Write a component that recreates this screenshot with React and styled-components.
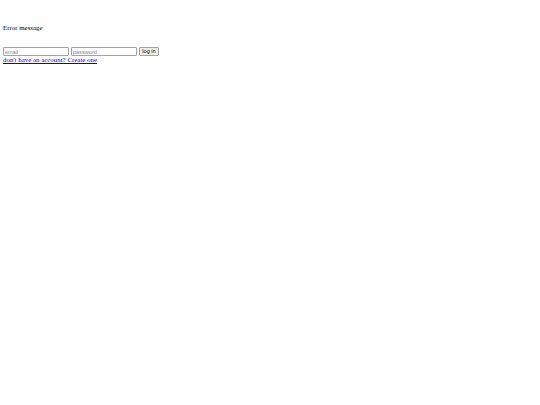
import React from 'react'
import styled, { createGlobalStyle } from 'styled-components'

const Global = createGlobalStyle`
    html, body {
        margin: 0;
        background: #fff;
    }
`

const Page = styled.div`
    padding: 3px;
    font-family: "Liberation Serif", "Times New Roman", serif;
    font-size: 6.9px;
    line-height: 8px;
    color: #000;
`

const ErrorText = styled.p`
    margin: 21px 0 0;
`

const Form = styled.form`
    display: flex;
    align-items: center;
    gap: 2px;
    margin-top: 15px;
    height: 9px;
`

const Field = styled.input`
    box-sizing: border-box;
    width: 66px;
    height: 9px;
    margin: 0;
    padding: 0 1px;
    border: 1px solid #a3a3a3;
    border-radius: 1px;
    font-family: "Liberation Sans", Arial, sans-serif;
    font-size: 5.6px;
    outline: none;
    &::placeholder {
        color: #8a8a8a;
    }
`

const Button = styled.button`
    box-sizing: border-box;
    width: 20px;
    height: 9px;
    margin: 0;
    padding: 0;
    border: 1px solid #a3a3a3;
    border-radius: 1px;
    background: #efefef;
    color: #000;
    font-family: "Liberation Sans", Arial, sans-serif;
    font-size: 5.6px;
    line-height: 7px;
`

const Link = styled.a`
    display: block;
    color: #0000ee;
    text-decoration: underline;
`

const App = () => {
    return (
        <Page>
            <Global />
            <ErrorText>Error message</ErrorText>
            <Form onSubmit={e => e.preventDefault()}>
                <Field type="email" placeholder="email" />
                <Field type="password" placeholder="password" />
                <Button type="submit">log in</Button>
            </Form>
            <Link href="#signup">don't have an account? Create one</Link>
        </Page>
    )
}

export default App
